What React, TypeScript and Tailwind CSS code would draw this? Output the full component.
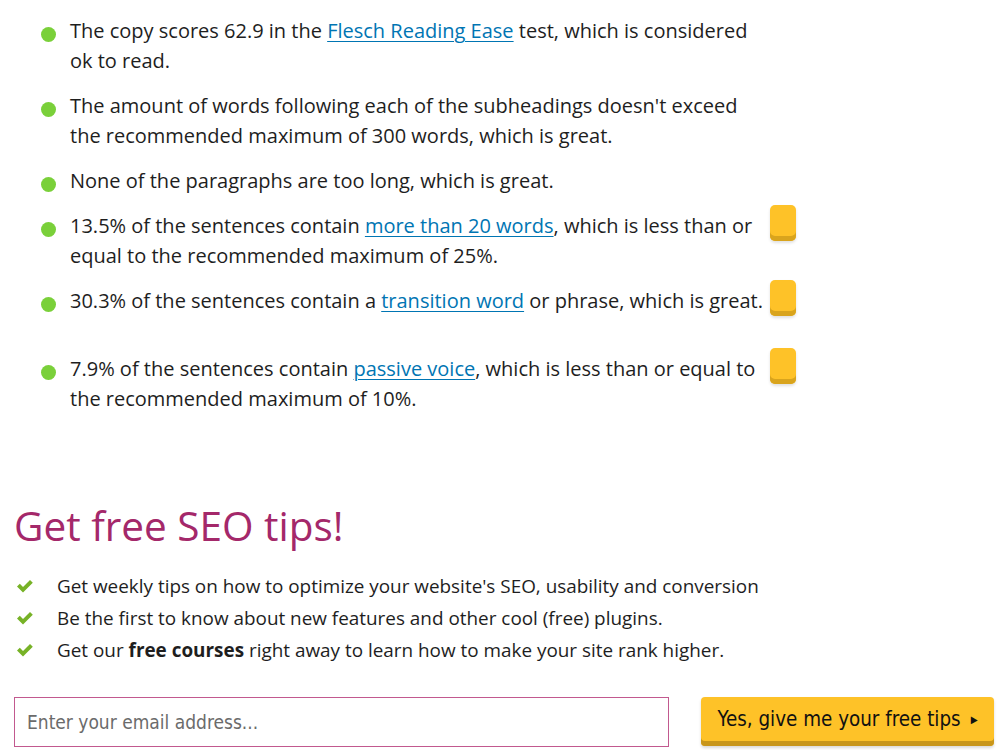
import { ReactNode } from "react";

interface Item {
  id: number;
  body: ReactNode;
  marker: boolean;
}

const link = "text-[#0075b3] underline underline-offset-[3px] decoration-1";

const items: Item[] = [
  {
    id: 1,
    marker: false,
    body: (
      <>
        The copy scores 62.9 in the <a className={link}>Flesch Reading Ease</a> test, which is
        considered ok to read.
      </>
    ),
  },
  {
    id: 2,
    marker: false,
    body: (
      <>
        The amount of words following each of the subheadings doesn't exceed the recommended
        maximum of 300 words, which is great.
      </>
    ),
  },
  {
    id: 3,
    marker: false,
    body: <>None of the paragraphs are too long, which is great.</>,
  },
  {
    id: 4,
    marker: true,
    body: (
      <>
        13.5% of the sentences contain <a className={link}>more than 20 words</a>, which is less
        than or equal to the recommended maximum of 25%.
      </>
    ),
  },
  {
    id: 5,
    marker: true,
    body: (
      <>
        30.3% of the sentences contain a <a className={link}>transition word</a> or phrase, which
        is great.
      </>
    ),
  },
  {
    id: 6,
    marker: true,
    body: (
      <>
        7.9% of the sentences contain <a className={link}>passive voice</a>, which is less than or
        equal to the recommended maximum of 10%.
      </>
    ),
  },
];

const tips: ReactNode[] = [
  <>Get weekly tips on how to optimize your website's SEO, usability and conversion</>,
  <>Be the first to know about new features and other cool (free) plugins.</>,
  <>
    Get our <strong className="font-bold">free courses</strong> right away to learn how to make
    your site rank higher.
  </>,
];

function Check() {
  return (
    <svg viewBox="0 0 16 13" className="w-[16px] h-[13px] shrink-0" fill="#77b227">
      <path d="M0 6.6 L2.8 3.8 L6 7 L13 0 L15.8 2.8 L6 12.6 Z" />
    </svg>
  );
}

export default function App() {
  return (
    <div className="w-[1000px] h-[750px] overflow-hidden bg-white text-[#1e1e1e] font-['Open_Sans',sans-serif]">
      <ul className="pl-[41px] pt-[16px] flex flex-col gap-[15px]">
        {items.map((item) => (
          <li key={item.id} className="flex items-start">
            <span className="w-[15px] h-[15px] rounded-full bg-[#7ad03a] mt-[11px] shrink-0" />
            <p className="w-[695px] ml-[14px] text-[20px] leading-[30px]">{item.body}</p>
            {item.marker && (
              <button className="ml-[5px] -mt-[6px] mb-[23px] w-[26px] h-[36px] rounded-[5px] bg-[#fec228] shadow-[inset_0_-5px_0_#d9a41d,0_2px_3px_rgba(0,0,0,0.12)] shrink-0" />
            )}
          </li>
        ))}
      </ul>

      <h2 className="mt-[84px] ml-[14px] text-[40.5px] leading-[56px] text-[#a4286a]">
        Get free SEO tips!
      </h2>

      <ul className="mt-[16px] ml-[17px] flex flex-col">
        {tips.map((tip, i) => (
          <li key={i} className="flex items-center h-[32px] text-[18.9px]">
            <Check />
            <span className="ml-[24px]">{tip}</span>
          </li>
        ))}
      </ul>

      <div className="mt-[31px] ml-[14px] flex items-start">
        <input
          placeholder="Enter your email address..."
          className="w-[655px] h-[50px] border border-[#c2598f] px-[12px] text-[19px] placeholder:text-[#6b6b6b] outline-none font-['DejaVu_Sans_Condensed',sans-serif]"
        />
        <button className="ml-[32px] w-[293px] h-[49px] rounded-[4px] bg-[#fec228] shadow-[inset_0_-5px_0_#c8961b,0_2px_3px_rgba(0,0,0,0.15)] pb-[5px] flex items-center justify-center gap-[10px] text-[20.4px] text-[#111] font-['DejaVu_Sans_Condensed',sans-serif]">
          Yes, give me your free tips
          <span className="text-[10px]">▶</span>
        </button>
      </div>
    </div>
  );
}
